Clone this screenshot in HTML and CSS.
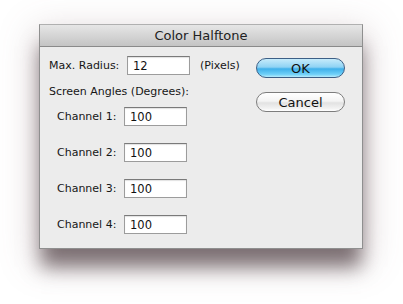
FILE: index.html
```html
<!DOCTYPE html>
<html lang="en">
<head>
<meta charset="UTF-8">
<meta name="viewport" content="width=device-width, initial-scale=1.0">
<title>Color Halftone</title>
<link rel="stylesheet" href="styles.css">
</head>
<body>
<div class="dialog">
  <div class="titlebar">Color Halftone</div>
  <div class="content">
    <div class="fields">
      <div class="row">
        <label class="radius-label" for="radius">Max. Radius:</label>
        <input type="text" id="radius" class="field radius-field" value="12">
        <span class="unit">(Pixels)</span>
      </div>
      <div class="heading">Screen Angles (Degrees):</div>
      <div class="row channel">
        <label for="ch1">Channel 1:</label>
        <input type="text" id="ch1" class="field" value="100">
      </div>
      <div class="row channel">
        <label for="ch2">Channel 2:</label>
        <input type="text" id="ch2" class="field" value="100">
      </div>
      <div class="row channel">
        <label for="ch3">Channel 3:</label>
        <input type="text" id="ch3" class="field" value="100">
      </div>
      <div class="row channel">
        <label for="ch4">Channel 4:</label>
        <input type="text" id="ch4" class="field" value="100">
      </div>
    </div>
    <div class="buttons">
      <button class="btn btn-ok">OK</button>
      <button class="btn btn-cancel">Cancel</button>
    </div>
  </div>
</div>
</body>
</html>
```
FILE: styles.css
```css
html {
  background-color: #ffffff;
}

body {
  margin: 0;
  padding: 24px 0 0 39px;
  min-height: 304px;
  box-sizing: border-box;
  background-color: #ffffff;
  font-family: 'DejaVu Sans', 'Liberation Sans', sans-serif;
  font-size: 11px;
  color: #161616;
}

.dialog {
  width: 324px;
  height: 225px;
  box-sizing: border-box;
  background-color: #ececec;
  border: 1px solid #8f8f8f;
  border-top-color: #b0b0b0;
  box-shadow: 0 20px 18px -2px rgba(55, 38, 44, 0.6), 0 10px 34px 4px rgba(130, 95, 105, 0.25);
}

.titlebar {
  height: 21px;
  line-height: 21px;
  text-align: center;
  font-size: 13px;
  color: #222222;
  background: linear-gradient(#e6e6e6, #c4c4c4);
  border-bottom: 1px solid #8a8a8a;
}

.content {
  display: flex;
  padding: 9px 17px 0 9px;
}

.fields {
  flex: 1;
}

.row {
  display: flex;
  align-items: center;
  height: 19px;
}

.row label {
  flex-shrink: 0;
}

.radius-label {
  width: 78px;
}

.field {
  flex-shrink: 0;
  width: 63px;
  height: 19px;
  box-sizing: border-box;
  margin: 0;
  padding: 0 0 0 5px;
  border: 1px solid #9c9c9c;
  border-top-color: #7a7a7a;
  background-color: #ffffff;
  font-family: inherit;
  font-size: 11.5px;
  color: #111111;
  box-shadow: inset 0 1px 1px rgba(0, 0, 0, 0.12);
}

.unit {
  margin-left: 10px;
}

.heading {
  margin-top: 9px;
  line-height: 15px;
}

.channel {
  padding-left: 8px;
  margin-top: 17px;
}

.heading + .channel {
  margin-top: 8px;
}

.channel label {
  width: 67px;
}

.buttons {
  display: flex;
  flex-direction: column;
  gap: 14px;
  margin-top: 2px;
  width: 89px;
}

.btn {
  height: 20px;
  padding: 0;
  border-radius: 10px;
  font-family: inherit;
  font-size: 13px;
  color: #111111;
  cursor: pointer;
}

.btn-ok {
  border: 1px solid #3d5f86;
  background: linear-gradient(#c6ebfb 0%, #8fd3f4 45%, #3fb0ea 55%, #6fd0f8 85%, #b6ecfd 100%);
}

.btn-cancel {
  border: 1px solid #7d7d7d;
  background: linear-gradient(#ffffff 0%, #f4f4f4 45%, #e2e2e2 55%, #f2f2f2 85%, #ffffff 100%);
}
```
